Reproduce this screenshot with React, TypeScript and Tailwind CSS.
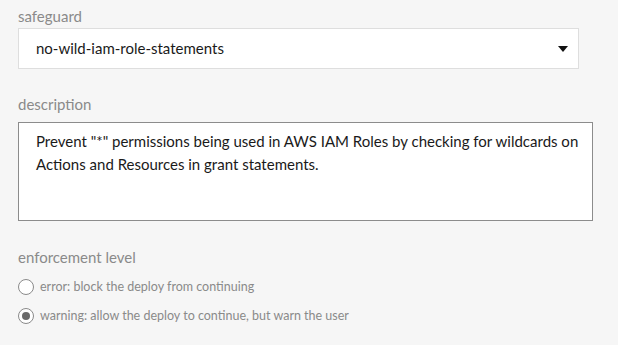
import React from "react";

export default function App() {
  return (
    <div className="w-[618px] h-[345px] bg-[#f6f6f6] overflow-hidden" style={{ fontFamily: "Lato, 'Noto Sans', sans-serif" }}>
      <div className="pl-[18px] pt-[6px]">
        <div className="text-[15px] leading-[20px] text-[#8a8a8a]">safeguard</div>
        <div className="mt-[2px] w-[561px] h-[41px] bg-white border border-[#dedede] flex items-center justify-between pl-[17px] pr-[10px]">
          <span className="text-[15px] text-[#1a1a1a]">no-wild-iam-role-statements</span>
          <svg width="10" height="6" viewBox="0 0 10 6"><polygon points="0,0 10,0 5,6" fill="#111" /></svg>
        </div>
        <div className="mt-[25px] text-[15px] leading-[20px] text-[#8a8a8a]">description</div>
        <div className="mt-[8px] w-[575px] h-[99px] bg-white border border-[#8c8c8c] pl-[17px] pr-[10px] pt-[7px] text-[15px] leading-[23px] text-[#1a1a1a]">
          Prevent "*" permissions being used in AWS IAM Roles by checking for wildcards on Actions and Resources in grant statements.
        </div>
        <div className="mt-[26px] text-[15px] leading-[20px] text-[#8a8a8a]">enforcement level</div>
        <div className="mt-[11px] flex flex-col gap-[10px]">
          <div className="flex items-center gap-[6px]">
            <span className="w-[16px] h-[16px] rounded-full border border-[#8a8a8a] bg-white"></span>
            <span className="text-[12.5px] text-[#8a8a8a]">error: block the deploy from continuing</span>
          </div>
          <div className="flex items-center gap-[6px]">
            <span className="w-[16px] h-[16px] rounded-full border border-[#8a8a8a] bg-white flex items-center justify-center">
              <span className="w-[8px] h-[8px] rounded-full bg-[#6a6a6a]"></span>
            </span>
            <span className="text-[12.5px] text-[#8a8a8a]">warning: allow the deploy to continue, but warn the user</span>
          </div>
        </div>
      </div>
    </div>
  );
}
